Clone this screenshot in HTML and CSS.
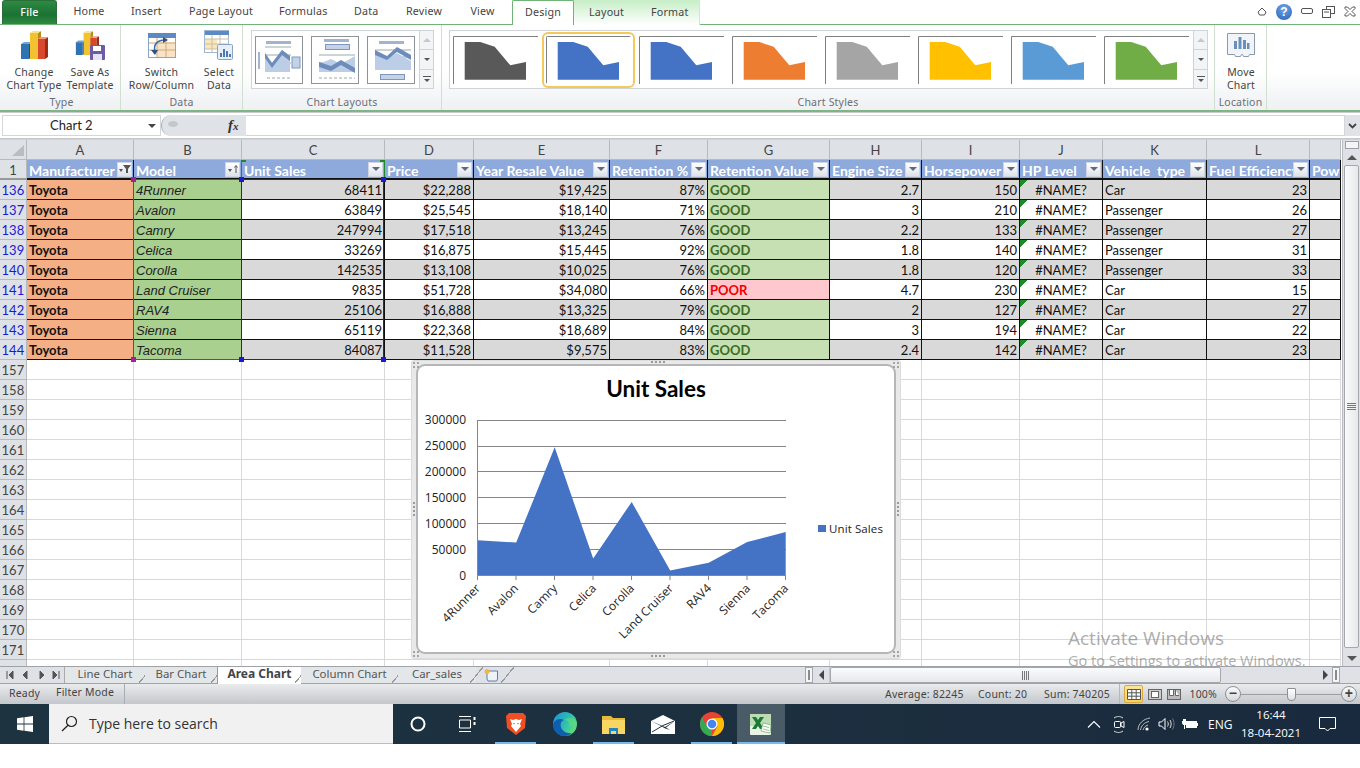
FILE: index.html
```html
<!DOCTYPE html>
<html lang="en">
<head>
  <meta charset="UTF-8" />
  <title>Car_sales - Microsoft Excel</title>
  <link rel="stylesheet" href="styles.css">
</head>
<body>
<svg class="defs" width="0" height="0">
  <symbol id="style-thumb" viewBox="0 0 85 48">
    <path d="M.5 48V.5H85" fill="none" stroke="#7f7f7f"/>
    <path d="M11.7 6H27.3L41.7 10.7 57.3 29.3 73 26V43.7H11.7Z" fill="currentColor"/>
  </symbol>
  <symbol id="bars" viewBox="0 0 28 30">
    <path d="M1 14h8v15H1z" fill="#2f73b5"/><path d="M9 14l3-2v15l-3 2z" fill="#174f86"/>
    <path d="M1 14l3-2h8l-3 2z" fill="#6ea7dc"/>
    <path d="M10 3h8v26h-8z" fill="#f2c230"/><path d="M18 3l3-2v26l-3 2z" fill="#b98d14"/>
    <path d="M10 3l3-2h8l-3 2z" fill="#f9e28a"/>
    <path d="M18 9h7v20h-7z" fill="#d9482b"/><path d="M25 9l3-2v20l-3 2z" fill="#9c2d15"/>
    <path d="M18 9l3-2h7l-3 2z" fill="#ee9a83"/>
  </symbol>
</svg>

<div class="app">
  <nav class="tabs">
    <a class="tab tab-file">File</a>
    <a class="tab tab-home">Home</a>
    <a class="tab tab-insert">Insert</a>
    <a class="tab tab-page">Page Layout</a>
    <a class="tab tab-formulas">Formulas</a>
    <a class="tab tab-data">Data</a>
    <a class="tab tab-review">Review</a>
    <a class="tab tab-view">View</a>
    <div class="chart-tools">
      <a class="tab tab-design">Design</a>
      <a class="tab tab-layout">Layout</a>
      <a class="tab tab-format">Format</a>
    </div>
    <div class="win-btns">
      <svg width="10" height="9" viewBox="0 0 10 9"><path d="M1 5l4-4 4 4-1.500 3h-5z" fill="#fff" stroke="#555"/></svg>
      <span class="help">?</span>
      <svg width="12" height="7" viewBox="0 0 12 7"><rect x=".5" y=".5" width="11" height="5" rx="1.500" fill="#fff" stroke="#555"/></svg>
      <svg width="13" height="12" viewBox="0 0 13 12"><rect x="4.500" y=".5" width="8" height="7" fill="#fff" stroke="#555"/><rect x=".5" y="3.500" width="8" height="8" fill="#fff" stroke="#555"/><path d="M2 6h5" stroke="#555"/></svg>
      <svg width="12" height="11" viewBox="0 0 12 11"><path d="M1 1h2.500L6 3.500 8.500 1H11v1.500L8 5.500l3 3V10H8.500L6 7.500 3.500 10H1V8.500l3-3-3-3z" fill="#fff" stroke="#555"/></svg>
    </div>
  </nav>

  <div class="ribbon">
    <section class="group g-type">
      <div class="group-body">
        <button class="big w-56">
          <svg class="big-icon" width="30" height="30"><use href="#bars"/></svg>
          <span>Change<br>Chart Type</span>
        </button>
        <button class="big w-56">
          <svg class="big-icon" width="30" height="30" viewBox="0 0 30 30">
            <use href="#bars" width="24" height="26" x="0" y="0"/>
            <rect x="15" y="15" width="15" height="15" rx="1" fill="#6f5aa8"/>
            <rect x="18" y="16" width="8" height="5" fill="#fff"/><rect x="18" y="24" width="9" height="6" fill="#e7e3f2"/>
          </svg>
          <span>Save As<br>Template</span>
        </button>
      </div>
      <div class="group-label">Type</div>
    </section>

    <section class="group g-data">
      <div class="group-body">
        <button class="big w-66">
          <svg class="big-icon" width="30" height="30" viewBox="0 0 30 30">
            <rect x="1.500" y="3.500" width="27" height="24" fill="#fff" stroke="#8da6c6"/>
            <rect x="1" y="3" width="28" height="5" fill="#5d8ac2"/>
            <rect x="10" y="12" width="18" height="15" fill="#f7e3c8"/>
            <path d="M2 13h26M2 20h26M10 8v19M19 8v19" stroke="#d6a774"/>
            <path d="M8 21c-2-7 3-11 10-11" fill="none" stroke="#3d6ba5" stroke-width="1.500"/>
            <path d="M16 7l5 3-5 3zM4 20l7 0-3 5z" fill="#2a5488"/>
          </svg>
          <span>Switch<br>Row/Column</span>
        </button>
        <button class="big w-48">
          <svg class="big-icon" width="30" height="30" viewBox="0 0 30 30">
            <rect x=".5" y=".5" width="24" height="22" fill="#fff" stroke="#9fb6d3"/>
            <rect x="1" y="1" width="24" height="4" fill="#5d8ac2"/>
            <rect x="1" y="9" width="12" height="10" fill="#fbe6b8"/>
            <path d="M1 9h24M1 14h24M1 19h24M8 5v18M16 5v18" stroke="#c8bfa8"/>
            <rect x="13.500" y="14.500" width="15" height="15" rx="1" fill="#e8eef6" stroke="#8ba3c0"/>
            <path d="M16 27v-4h2v4zM19 27v-8h2v8zM22 27v-6h2v6zM25 27v-3h2v3z" fill="#4e79b0"/>
          </svg>
          <span>Select<br>Data</span>
        </button>
      </div>
      <div class="group-label">Data</div>
    </section>

    <section class="group g-layouts">
      <div class="group-body">
        <div class="gallery gallery-layouts">
          <svg class="layout-thumb" width="48" height="48" viewBox="0 0 48 48">
            <rect x=".5" y=".5" width="47" height="47" fill="#fff" stroke="#8e9398"/>
            <rect x="11" y="5" width="25" height="3" fill="#a4b3cf"/>
            <rect x="3" y="16" width="2" height="17" fill="#a4b3cf"/>
            <path d="M10 11h26M10 19h26M10 27h26" stroke="#9aa"/>
            <path d="M10 17l7 10 10-13 8 6v16H10z" fill="#bccde6"/>
            <path d="M10 17l7 10 10-13 8 6v5l-8-6-10 13-7-10z" fill="#6d8cbb"/>
            <rect x="37" y="21" width="8" height="11" fill="#c4d2e8" stroke="#7f97bd"/>
            <path d="M12 42h24" stroke="#9aa" stroke-dasharray="3 2"/>
          </svg>
          <svg class="layout-thumb" width="48" height="48" viewBox="0 0 48 48">
            <rect x=".5" y=".5" width="47" height="47" fill="#fff" stroke="#8e9398"/>
            <rect x="13" y="3" width="25" height="3" fill="#a4b3cf"/>
            <rect x="14.500" y="8.500" width="24" height="5" fill="#c4d2e8" stroke="#7f97bd"/>
            <path d="M8 19h36M8 27h36" stroke="#9aa"/>
            <path d="M8 28l12-5 10 5 14-8v16H8z" fill="#bccde6"/>
            <path d="M8 26l12 4 10-6 14 8v5l-14-8-10 6-12-4z" fill="#6d8cbb"/>
            <path d="M8 42h36" stroke="#9aa" stroke-dasharray="3 2"/>
          </svg>
          <svg class="layout-thumb" width="48" height="48" viewBox="0 0 48 48">
            <rect x=".5" y=".5" width="47" height="47" fill="#fff" stroke="#8e9398"/>
            <rect x="12" y="5" width="25" height="3" fill="#a4b3cf"/>
            <path d="M8 14h36M8 21h36" stroke="#9aa"/>
            <path d="M8 17l12 6 10-6 14 8v9H8z" fill="#bccde6"/>
            <path d="M8 14l12 6 10-9 14 8v5l-14-8-10 8-12-5z" fill="#6d8cbb"/>
            <rect x="13.500" y="38.500" width="24" height="5" fill="#c4d2e8" stroke="#7f97bd"/>
          </svg>
          <div class="gal-scroll">
            <span class="up"></span><span class="down"></span><span class="more"></span>
          </div>
        </div>
      </div>
      <div class="group-label">Chart Layouts</div>
    </section>

    <section class="group g-styles">
      <div class="group-body">
        <div class="gallery gallery-styles">
          <svg class="style-thumb s-dark"><use href="#style-thumb"/></svg>
          <svg class="style-thumb s-blue selected"><use href="#style-thumb"/></svg>
          <svg class="style-thumb s-blue"><use href="#style-thumb"/></svg>
          <svg class="style-thumb s-orange"><use href="#style-thumb"/></svg>
          <svg class="style-thumb s-gray"><use href="#style-thumb"/></svg>
          <svg class="style-thumb s-yellow"><use href="#style-thumb"/></svg>
          <svg class="style-thumb s-sky"><use href="#style-thumb"/></svg>
          <svg class="style-thumb s-green"><use href="#style-thumb"/></svg>
          <div class="gal-scroll">
            <span class="up"></span><span class="down"></span><span class="more"></span>
          </div>
        </div>
      </div>
      <div class="group-label">Chart Styles</div>
    </section>

    <section class="group g-location">
      <div class="group-body">
        <button class="big w-50">
          <svg class="big-icon" width="30" height="26" viewBox="0 0 30 26">
            <path d="M1.500 1.500h27v21h-5l-1 2h-5l-1-2h-1l-1 2h-5l-1-2h-7z" fill="#f1f4f8" stroke="#8d98a8"/>
            <path d="M8 17V9h3v8zM12.500 17V5h3v12zM17 17V8h3v9zM21 17v-6h2.500v6z" fill="#6b8fbd"/>
          </svg>
          <span>Move<br>Chart</span>
        </button>
      </div>
      <div class="group-label">Location</div>
    </section>
  </div>

  <div class="formula-bar">
    <div class="name-box"><span>Chart 2</span><i class="caret"></i></div>
    <div class="fx-pill"><b class="fx-dot"></b><em class="fx">f<small>x</small></em></div>
    <div class="formula-input"></div>
    <div class="formula-expand">
      <svg width="9" height="6" viewBox="0 0 9 6"><path d="M1 1l3.500 3.500L8 1" fill="none" stroke="#444" stroke-width="1.800"/></svg>
    </div>
  </div>

  <div class="sheet">
    <div class="grid-wrap">
      <table class="grid">
        <colgroup>
          <col class="c-rh"><col class="c-a"><col class="c-b"><col class="c-c"><col class="c-d"><col class="c-e"><col class="c-f"><col class="c-g"><col class="c-h"><col class="c-i"><col class="c-j"><col class="c-k"><col class="c-l"><col class="c-m">
        </colgroup>
        <thead>
          <tr class="letters">
            <th class="corner"><svg width="14" height="13" viewBox="0 0 14 13"><path d="M13 1v11H1z" fill="#b9bec4"/></svg></th>
            <th>A</th><th>B</th><th>C</th><th>D</th><th>E</th><th>F</th><th>G</th><th>H</th><th>I</th><th>J</th><th>K</th><th>L</th><th></th>
          </tr>
          <tr class="head">
            <th class="rh">1</th>
            <th><div class="hd"><span>Manufacturer</span><i class="fbtn funnel"><svg width="12" height="10" viewBox="0 0 12 10"><path d="M4 1h8L9 5v4H7V5z" fill="#555"/><path d="M0 5h4L2 8z" fill="#555"/></svg></i></div></th>
            <th><div class="hd"><span>Model</span><i class="fbtn sort"><svg width="12" height="10" viewBox="0 0 12 10"><path d="M1 5h4L3 8z" fill="#555"/><path d="M9 9V2M7.500 3.500L9 1.500l1.500 2" fill="none" stroke="#555"/></svg></i></div></th>
            <th><div class="hd"><span>Unit Sales</span><i class="fbtn"></i></div></th>
            <th><div class="hd"><span>Price</span><i class="fbtn"></i></div></th>
            <th><div class="hd"><span>Year Resale Value</span><i class="fbtn"></i></div></th>
            <th><div class="hd"><span>Retention %</span><i class="fbtn"></i></div></th>
            <th><div class="hd"><span>Retention Value</span><i class="fbtn"></i></div></th>
            <th><div class="hd"><span>Engine Size</span><i class="fbtn"></i></div></th>
            <th><div class="hd"><span>Horsepower</span><i class="fbtn"></i></div></th>
            <th><div class="hd"><span>HP Level</span><i class="fbtn"></i></div></th>
            <th><div class="hd"><span>Vehicle&nbsp; type</span><i class="fbtn"></i></div></th>
            <th><div class="hd"><span>Fuel Efficiency</span><i class="fbtn"></i></div></th>
            <th><div class="hd"><span>Power Perf</span></div></th>
          </tr>
        </thead>
        <tbody>
          <tr class="data odd"><th class="rh blue">136</th><td class="make">Toyota</td><td class="model">4Runner</td><td class="num">68411</td><td class="num">$22,288</td><td class="num">$19,425</td><td class="num">87%</td><td class="good">GOOD</td><td class="num">2.7</td><td class="num">150</td><td class="err">#NAME?</td><td>Car</td><td class="num">23</td><td></td></tr>
          <tr class="data"><th class="rh blue">137</th><td class="make">Toyota</td><td class="model">Avalon</td><td class="num">63849</td><td class="num">$25,545</td><td class="num">$18,140</td><td class="num">71%</td><td class="good">GOOD</td><td class="num">3</td><td class="num">210</td><td class="err">#NAME?</td><td>Passenger</td><td class="num">26</td><td></td></tr>
          <tr class="data odd"><th class="rh blue">138</th><td class="make">Toyota</td><td class="model">Camry</td><td class="num">247994</td><td class="num">$17,518</td><td class="num">$13,245</td><td class="num">76%</td><td class="good">GOOD</td><td class="num">2.2</td><td class="num">133</td><td class="err">#NAME?</td><td>Passenger</td><td class="num">27</td><td></td></tr>
          <tr class="data"><th class="rh blue">139</th><td class="make">Toyota</td><td class="model">Celica</td><td class="num">33269</td><td class="num">$16,875</td><td class="num">$15,445</td><td class="num">92%</td><td class="good">GOOD</td><td class="num">1.8</td><td class="num">140</td><td class="err">#NAME?</td><td>Passenger</td><td class="num">31</td><td></td></tr>
          <tr class="data odd"><th class="rh blue">140</th><td class="make">Toyota</td><td class="model">Corolla</td><td class="num">142535</td><td class="num">$13,108</td><td class="num">$10,025</td><td class="num">76%</td><td class="good">GOOD</td><td class="num">1.8</td><td class="num">120</td><td class="err">#NAME?</td><td>Passenger</td><td class="num">33</td><td></td></tr>
          <tr class="data"><th class="rh blue">141</th><td class="make">Toyota</td><td class="model">Land Cruiser</td><td class="num">9835</td><td class="num">$51,728</td><td class="num">$34,080</td><td class="num">66%</td><td class="poor">POOR</td><td class="num">4.7</td><td class="num">230</td><td class="err">#NAME?</td><td>Car</td><td class="num">15</td><td></td></tr>
          <tr class="data odd"><th class="rh blue">142</th><td class="make">Toyota</td><td class="model">RAV4</td><td class="num">25106</td><td class="num">$16,888</td><td class="num">$13,325</td><td class="num">79%</td><td class="good">GOOD</td><td class="num">2</td><td class="num">127</td><td class="err">#NAME?</td><td>Car</td><td class="num">27</td><td></td></tr>
          <tr class="data"><th class="rh blue">143</th><td class="make">Toyota</td><td class="model">Sienna</td><td class="num">65119</td><td class="num">$22,368</td><td class="num">$18,689</td><td class="num">84%</td><td class="good">GOOD</td><td class="num">3</td><td class="num">194</td><td class="err">#NAME?</td><td>Car</td><td class="num">22</td><td></td></tr>
          <tr class="data odd"><th class="rh blue">144</th><td class="make">Toyota</td><td class="model">Tacoma</td><td class="num">84087</td><td class="num">$11,528</td><td class="num">$9,575</td><td class="num">83%</td><td class="good">GOOD</td><td class="num">2.4</td><td class="num">142</td><td class="err">#NAME?</td><td>Car</td><td class="num">23</td><td></td></tr>
          <tr><th class="rh">157</th><td></td><td></td><td></td><td></td><td></td><td></td><td></td><td></td><td></td><td></td><td></td><td></td><td></td></tr>
          <tr><th class="rh">158</th><td></td><td></td><td></td><td></td><td></td><td></td><td></td><td></td><td></td><td></td><td></td><td></td><td></td></tr>
          <tr><th class="rh">159</th><td></td><td></td><td></td><td></td><td></td><td></td><td></td><td></td><td></td><td></td><td></td><td></td><td></td></tr>
          <tr><th class="rh">160</th><td></td><td></td><td></td><td></td><td></td><td></td><td></td><td></td><td></td><td></td><td></td><td></td><td></td></tr>
          <tr><th class="rh">161</th><td></td><td></td><td></td><td></td><td></td><td></td><td></td><td></td><td></td><td></td><td></td><td></td><td></td></tr>
          <tr><th class="rh">162</th><td></td><td></td><td></td><td></td><td></td><td></td><td></td><td></td><td></td><td></td><td></td><td></td><td></td></tr>
          <tr><th class="rh">163</th><td></td><td></td><td></td><td></td><td></td><td></td><td></td><td></td><td></td><td></td><td></td><td></td><td></td></tr>
          <tr><th class="rh">164</th><td></td><td></td><td></td><td></td><td></td><td></td><td></td><td></td><td></td><td></td><td></td><td></td><td></td></tr>
          <tr><th class="rh">165</th><td></td><td></td><td></td><td></td><td></td><td></td><td></td><td></td><td></td><td></td><td></td><td></td><td></td></tr>
          <tr><th class="rh">166</th><td></td><td></td><td></td><td></td><td></td><td></td><td></td><td></td><td></td><td></td><td></td><td></td><td></td></tr>
          <tr><th class="rh">167</th><td></td><td></td><td></td><td></td><td></td><td></td><td></td><td></td><td></td><td></td><td></td><td></td><td></td></tr>
          <tr><th class="rh">168</th><td></td><td></td><td></td><td></td><td></td><td></td><td></td><td></td><td></td><td></td><td></td><td></td><td></td></tr>
          <tr><th class="rh">169</th><td></td><td></td><td></td><td></td><td></td><td></td><td></td><td></td><td></td><td></td><td></td><td></td><td></td></tr>
          <tr><th class="rh">170</th><td></td><td></td><td></td><td></td><td></td><td></td><td></td><td></td><td></td><td></td><td></td><td></td><td></td></tr>
          <tr><th class="rh">171</th><td></td><td></td><td></td><td></td><td></td><td></td><td></td><td></td><td></td><td></td><td></td><td></td><td></td></tr>
          <tr><th class="rh"></th><td></td><td></td><td></td><td></td><td></td><td></td><td></td><td></td><td></td><td></td><td></td><td></td><td></td></tr>
        </tbody>
      </table>

      <!-- range highlights of the chart's data -->
      <div class="range range-name"></div>
      <div class="range range-cat"><i class="h tl"></i><i class="h tr"></i><i class="h bl"></i><i class="h br"></i></div>
      <div class="range range-val"><i class="h tl"></i><i class="h tr"></i><i class="h bl"></i><i class="h br"></i></div>

      <div class="chart-frame">
        <i class="grip g-top"></i><i class="grip g-bot"></i><i class="grip g-left"></i><i class="grip g-right"></i>
        <i class="grip-c c-tl"></i><i class="grip-c c-tr"></i><i class="grip-c c-bl"></i><i class="grip-c c-br"></i>
        <div class="chart-area">
          <svg class="chart-svg" width="476" height="286" viewBox="418 366 476 286">
            <text class="chart-title" x="656" y="397">Unit Sales</text>
            <g class="gridlines">
              <path d="M477.500 420.500H786M477.500 446.500H786M477.500 471.500H786M477.500 497.500H786M477.500 523.500H786M477.500 549.500H786"/>
            </g>
            <polygon class="area" points="477.700,540.300 516.200,542.600 554.700,447.200 593.200,558.500 631.700,501.900 670.200,570.600 708.700,562.700 747.200,542 785.700,532.100 785.700,575.700 477.700,575.700"/>
            <g class="axis">
              <path d="M477.500 420V580M477 575.500H786M516 575v5M554.500 575v5M593 575v5M631.500 575v5M670 575v5M708.500 575v5M747 575v5M785.500 575v5"/>
            </g>
            <g class="y-labels">
              <text x="466" y="424">300000</text>
              <text x="466" y="450">250000</text>
              <text x="466" y="476">200000</text>
              <text x="466" y="502">150000</text>
              <text x="466" y="528">100000</text>
              <text x="466" y="554">50000</text>
              <text x="466" y="580">0</text>
            </g>
            <g class="x-labels">
              <text transform="translate(481 589) rotate(-45)">4Runner</text>
              <text transform="translate(519 589) rotate(-45)">Avalon</text>
              <text transform="translate(558 589) rotate(-45)">Camry</text>
              <text transform="translate(597 589) rotate(-45)">Celica</text>
              <text transform="translate(635 589) rotate(-45)">Corolla</text>
              <text transform="translate(674 589) rotate(-45)">Land Cruiser</text>
              <text transform="translate(712 589) rotate(-45)">RAV4</text>
              <text transform="translate(751 589) rotate(-45)">Sienna</text>
              <text transform="translate(789 589) rotate(-45)">Tacoma</text>
            </g>
            <rect class="area" x="818" y="525" width="8" height="7"/>
            <text class="legend" x="829" y="533">Unit Sales</text>
          </svg>
        </div>
      </div>

      <div class="activate">
        <div class="act-1">Activate Windows</div>
        <div class="act-2">Go to Settings to activate Windows.</div>
      </div>
    </div>

    <div class="vscroll">
      <div class="split-h"></div>
      <div class="arr-btn"><i class="tri-up"></i></div>
      <div class="v-thumb"><span class="v-grip"></span></div>
      <div class="arr-btn"><i class="tri-down"></i></div>
    </div>
  </div>

  <div class="sheet-tabs">
    <div class="tab-nav">
      <svg width="58" height="10" viewBox="0 0 58 10">
        <path d="M2 1v8M8 1L4 5l4 4zM22 1l-4 4 4 4zM35 1l4 4-4 4zM48 1l4 4-4 4zM54 1v8" fill="#555" stroke="#555"/>
      </svg>
    </div>
    <a class="s-tab s-line">Line Chart</a>
    <a class="s-tab s-bar">Bar Chart</a>
    <a class="s-tab s-area active">Area Chart</a>
    <a class="s-tab s-col">Column Chart</a>
    <a class="s-tab s-car">Car_sales</a>
    <a class="s-tab s-new">
      <svg width="16" height="14" viewBox="0 0 16 14"><path d="M4 3h10.500v8l-1 2H5l-1-2z" fill="#eef3fa" stroke="#5d7ea8"/><circle cx="4" cy="3.500" r="2.500" fill="#f3b73e"/></svg>
    </a>
    <div class="h-split"><i></i></div>
    <div class="h-left"><i class="tri-left"></i></div>
    <div class="h-track">
      <div class="h-thumb"><span class="h-grip"></span></div>
      <i class="tri-right"></i>
      <div class="h-split end"><i></i></div>
    </div>
  </div>

  <footer class="status">
    <span class="st-ready">Ready</span>
    <span class="st-filter">Filter Mode</span>
    <div class="st-right">
      <span class="st-avg">Average: 82245</span>
      <span class="st-count">Count: 20</span>
      <span class="st-sum">Sum: 740205</span>
      <div class="views">
        <span class="view active"><svg width="14" height="11" viewBox="0 0 14 11"><path d="M.5.5h13v10H.5zM.5 3.800h13M.5 7.200h13M4.800.5v10M9.200.5v10" fill="#fff" stroke="#555"/></svg></span>
        <span class="view"><svg width="14" height="11" viewBox="0 0 14 11"><rect x=".5" y=".5" width="13" height="10" fill="#ccc" stroke="#666"/><rect x="3.500" y="2.500" width="7" height="6" fill="#fff" stroke="#666"/></svg></span>
        <span class="view"><svg width="14" height="11" viewBox="0 0 14 11"><rect x=".5" y=".5" width="13" height="10" fill="#bbb" stroke="#666"/><path d="M2.500 1v5.500h4V1M8.500 1v5.500h3.500" fill="#fff" stroke="#666"/></svg></span>
      </div>
      <span class="st-zoom">100%</span>
      <span class="zoom-btn">&#8722;</span>
      <div class="zoom-track"><i class="zoom-thumb"></i></div>
      <span class="zoom-btn">+</span>
    </div>
  </footer>

  <div class="taskbar">
    <div class="start">
      <svg width="16" height="16" viewBox="0 0 16 16"><path d="M0 2.300l6.600-1v6.300H0zM7.400 1.200L16 0v7.600H7.400zM0 8.400h6.600v6.300l-6.600-1zM7.400 8.400H16V16l-8.600-1.200z" fill="#fff"/></svg>
    </div>
    <div class="search">
      <svg width="17" height="17" viewBox="0 0 17 17"><circle cx="10.500" cy="6.500" r="5" fill="none" stroke="#222" stroke-width="1.200"/><path d="M7 10.200L1 16" stroke="#222" stroke-width="1.300"/></svg>
      <span>Type here to search</span>
    </div>
    <div class="task-icons">
      <div class="ti"><svg width="16" height="16" viewBox="0 0 16 16"><circle cx="8" cy="8" r="6.500" fill="none" stroke="#fff" stroke-width="2"/></svg></div>
      <div class="ti"><svg width="18" height="16" viewBox="0 0 18 16"><path d="M1 .5h12M1 15.500h12M1.500 4h11v8h-11z" fill="none" stroke="#fff"/><path d="M15.500 1h2v3h-2zM15.500 6h2v3h-2z" fill="#fff"/></svg></div>
      <div class="ti open"><svg width="22" height="24" viewBox="0 0 22 24">
        <path d="M4 1h14l3 3-1 12-9 7-9-7L1 4z" fill="#f04e23"/>
        <path d="M5 7l3 1 3-1 3 1 3-1-2 5 1 2-5 6-5-6 1-2z" fill="#fff"/>
        <path d="M8 11h2l-1 1.500zM12 11h2l-1 1.500z" fill="#f04e23"/>
      </svg></div>
      <div class="ti"><svg width="24" height="24" viewBox="0 0 24 24">
        <defs><linearGradient id="edgeg" x1="0" y1="0" x2="1" y2=".6"><stop offset="0" stop-color="#1b8fd8"/><stop offset=".6" stop-color="#2fbfb0"/><stop offset="1" stop-color="#5fdc7c"/></linearGradient></defs>
        <circle cx="12" cy="12" r="12" fill="url(#edgeg)"/>
        <path d="M0 12c1 7 7 12 14 11.800C8 25 0 21 0 12z" fill="#0c59a4"/>
        <path d="M0 12C2 7 7 6 11 8c-3 1-4 4-3 7 1 4 6 7 11 6-2 2-5 3-7 3C5 24 0 18 0 12z" fill="#0f5fb0"/>
        <path d="M11 8c4 0 6 3 5 6h6c1-3 1-4 0-6-2-2-6-3-11 0z" fill="#5fdc7c" opacity=".6"/>
      </svg></div>
      <div class="ti open"><svg width="23" height="19" viewBox="0 0 23 19">
        <path d="M0 1h9l2 2h12v16H0z" fill="#e5b93c"/><path d="M0 5h23v14H0z" fill="#f9d561"/>
        <path d="M7 13h9v6h-2v-3H9v3H7z" fill="#1f87c8"/>
      </svg></div>
      <div class="ti"><svg width="24" height="19" viewBox="0 0 24 19">
        <path d="M0 6L12 0l12 6v13H0z" fill="#fff"/>
        <path d="M0 6l14 6 10-6-9 6.500 4 2.500-6-2-1-1z" fill="#1d3340"/>
        <path d="M1 17l11-6.500L23 6" fill="none" stroke="#1d3340"/>
      </svg></div>
      <div class="ti open"><svg width="24" height="24" viewBox="0 0 24 24">
        <circle cx="12" cy="12" r="12" fill="#ea4335"/>
        <path d="M12 24a12 12 0 0 1-10.400-6A12 12 0 0 1 2 5.500L7 14l5 0z" fill="#34a853"/>
        <path d="M22.400 6A12 12 0 0 1 12 24l5.500-9.500L12 6z" fill="#fbbc05"/>
        <circle cx="12" cy="12" r="5.500" fill="#fff"/><circle cx="12" cy="12" r="4.300" fill="#4285f4"/>
      </svg></div>
      <div class="ti open active"><svg width="22" height="21" viewBox="0 0 22 21">
        <rect x="0" y="0" width="21" height="21" rx="1" fill="#e8f3e6"/>
        <rect x="0" y="0" width="21" height="12" fill="#bcdcb4"/>
        <path d="M2 3h4l2 3 2-3h4l-4 6 4 6h-4l-2-3-2 3H2l4-6z" fill="#1d7a34"/>
        <path d="M13 9l8 2-1 8-9-2z" fill="#fff" stroke="#6aa86a" stroke-width=".7"/>
        <path d="M13 12l6 1.500M13 15l6 1.500" stroke="#6aa86a" stroke-width=".7"/>
      </svg></div>
    </div>
    <div class="tray">
      <svg class="tr-up" width="14" height="8" viewBox="0 0 14 8"><path d="M1 7.500L7 1.500l6 6" fill="none" stroke="#fff" stroke-width="1.100"/></svg>
      <svg class="tr-meet" width="12" height="17" viewBox="0 0 12 17"><path d="M1 2c3-2 6-2 9 0M1 15c3 2 6 2 9 0" fill="none" stroke="#ddd"/><rect x="1.500" y="5.500" width="6" height="6" rx="1" fill="none" stroke="#fff"/><path d="M8 7l3-1.500v6L8 10z" fill="none" stroke="#fff"/></svg>
      <svg class="tr-wifi" width="14" height="14" viewBox="0 0 14 14"><path d="M1 13C1 7 6 2 13 1M3.500 13C4 9 7 5.500 12 4.500M6 13c.5-2 2-4 5-5" fill="none" stroke="#bbb"/><circle cx="10" cy="12" r="1.600" fill="#fff"/></svg>
      <svg class="tr-vol" width="17" height="14" viewBox="0 0 17 14"><path d="M1 5h2.500L7 1.500v11L3.500 9H1z" fill="none" stroke="#fff"/><path d="M9.500 4.500c1 1.500 1 3.500 0 5M12 3c1.500 2.500 1.500 5.500 0 8" fill="none" stroke="#ddd"/><path d="M14.500 1.500c2 3 2 8 0 11" fill="none" stroke="#777"/></svg>
      <svg class="tr-bat" width="16" height="12" viewBox="0 0 16 12"><rect x="4.500" y="3.500" width="10" height="6" fill="#fff" stroke="#fff"/><path d="M15 5h1v3h-1zM1 1v2h3V1M0 3h5v2l-1 2H1L0 5zM2 7h1v4H2z" fill="#fff"/></svg>
      <span class="tr-lang">ENG</span>
      <div class="clock"><div>16:44</div><div>18-04-2021</div></div>
      <svg class="tr-note" width="17" height="15" viewBox="0 0 17 15"><path d="M.5.5h16v11H11l-2.500 2.500L6 11.500H.5z" fill="none" stroke="#fff"/></svg>
    </div>
  </div>
</div>
</body>
</html>
```
FILE: styles.css
```css
* { box-sizing: border-box; }
html, body { margin: 0; background: #fff; }
body { width: 1360px; height: 768px; overflow: hidden; font-family: "Noto Sans", sans-serif; font-size: 11px; color: #444; }
.defs { position: absolute; }
.app { width: 1360px; height: 744px; display: flex; flex-direction: column; }
a { display: block; }
i, em { font-style: normal; }

/* ribbon tabs */
.tabs { height: 25px; display: flex; align-items: flex-end; border-bottom: 1px solid #6fb376; flex: none; font-size: 10.700px; letter-spacing: .2px; white-space: nowrap; }
.tab { height: 24px; line-height: 23px; text-align: center; flex: none; }
.tab-file { width: 55px; margin-left: 2px; color: #fff; font-weight: 500; border-radius: 3px 3px 0 0; background: linear-gradient(#2e8a42, #1b7233 60%, #2e8a42); border: 1px solid #2a6e3a; border-bottom: 0; }
.tab-home { width: 32px; margin-left: 16px; }
.tab-insert { width: 30px; margin-left: 26px; }
.tab-page { width: 62px; margin-left: 28px; }
.tab-formulas { width: 47px; margin-left: 28px; }
.tab-data { width: 24px; margin-left: 28px; }
.tab-review { width: 36px; margin-left: 28px; }
.tab-view { width: 25px; margin-left: 28px; }
.chart-tools { width: 188px; height: 25px; margin-left: 17px; margin-bottom: -1px; display: flex; align-items: flex-end; background: linear-gradient(#c6eec6, #fff); border-right: 1px solid #cfe8cf; }
.tab-design { width: 62px; height: 25px; background: #fff; border: 1px solid #6fb376; border-bottom: 0; border-radius: 2px 2px 0 0; }
.tab-layout { width: 34px; margin-left: 15px; }
.tab-format { width: 36px; margin-left: 28px; }
.win-btns { margin-left: auto; margin-right: 4px; height: 24px; display: flex; align-items: center; gap: 9px; padding-bottom: 1px; }
.help { width: 16px; height: 16px; border-radius: 50%; background: radial-gradient(circle at 50% 30%, #6ea4e6, #2a62b4); color: #fff; font: bold 12px/16px "Liberation Sans", sans-serif; text-align: center; }

/* ribbon */
.ribbon { height: 87px; flex: none; display: flex; padding-left: 3px; background: linear-gradient(#fff, #fff 55%, #eef0f2); border-bottom: 2px solid #7fb584; box-shadow: 0 1px 0 #c8cacc; }
.group { display: flex; flex-direction: column; border-right: 1px solid #cfe0d0; flex: none; }
.group-body { height: 70px; display: flex; padding-top: 5px; }
.group-label { height: 15px; line-height: 14px; text-align: center; color: #6a6f78; font-size: 10.500px; letter-spacing: .2px; }
.g-type { width: 118px; }
.g-type .group-body { padding-left: 3px; }
.g-data { width: 122px; }
.g-data .group-body { padding-left: 7px; }
.g-layouts { width: 199px; }
.g-layouts .group-body { padding-left: 8px; }
.g-styles { width: 773px; }
.g-styles .group-body { padding-left: 7px; }
.g-location { width: 52px; }
.g-location .group-body { padding-left: 1px; }
.big { border: 0; background: none; padding: 0; display: flex; flex-direction: column; align-items: center; font: 10.500px/13px "Noto Sans", sans-serif; color: #444; text-align: center; flex: none; white-space: nowrap; letter-spacing: .2px; }
.big-icon { height: 30px; margin-bottom: 6px; flex: none; }
.w-56 { width: 56px; }
.w-66 { width: 67px; }
.w-48 { width: 48px; }
.w-50 { width: 50px; }
.gallery { height: 59px; display: flex; align-items: center; background: #fff; border: 1px solid #d0d3d7; padding-left: 3px; position: relative; }
.gallery-layouts { width: 183px; gap: 8px; }
.gallery-styles { width: 759px; gap: 8px; }
.layout-thumb { flex: none; }
.style-thumb { width: 85px; height: 48px; flex: none; }
.style-thumb.selected { outline: 2px solid #f5c85a; outline-offset: 2px; border-radius: 2px; }
.s-dark { color: #595959; }
.s-blue { color: #4472c4; }
.s-orange { color: #ed7d31; }
.s-gray { color: #a5a5a5; }
.s-yellow { color: #ffc000; }
.s-sky { color: #5b9bd5; }
.s-green { color: #70ad47; }
.gal-scroll { position: absolute; right: 0; top: 0; bottom: 0; width: 14px; display: flex; flex-direction: column; background: #f3f4f6; border-left: 1px solid #d0d3d7; }
.gal-scroll span { flex: 1; display: flex; align-items: center; justify-content: center; border-bottom: 1px solid #d0d3d7; }
.gal-scroll span:last-child { border-bottom: 0; }
.gal-scroll .up::after { content: ""; border: 4px solid transparent; border-top: 0; border-bottom-color: #c4c8cd; }
.gal-scroll .down::after { content: ""; border: 3.500px solid transparent; border-bottom: 0; border-top-color: #555; }
.gal-scroll .more { flex-direction: column; gap: 2px; }
.gal-scroll .more::before { content: ""; width: 8px; height: 1px; background: #555; }
.gal-scroll .more::after { content: ""; border: 3.500px solid transparent; border-bottom: 0; border-top-color: #555; }

/* formula bar */
.formula-bar { height: 24px; margin-top: 3px; flex: none; display: flex; padding-left: 2px; border-bottom: 1px solid #c6c8cb; }
.name-box { width: 159px; height: 21px; background: #fff; border: 1px solid #d4d6d9; font: 13px/19px Lato, sans-serif; color: #222; position: relative; padding-left: 47px; }
.caret { position: absolute; right: 4px; top: 8px; border: 4px solid transparent; border-bottom: 0; border-top-color: #444; }
.fx-pill { width: 85px; height: 21px; background: #dfe2e6; display: flex; align-items: center; justify-content: flex-end; position: relative; border-left: 1px solid #aeb2b7; border-radius: 10px 0 0 10px; }
.fx-dot { position: absolute; left: 6px; top: 6px; width: 10px; height: 6px; border-radius: 50%; background: #c4c7cb; }
.fx { width: 18px; font: italic bold 15px "Liberation Serif", serif; color: #333; }
.fx small { font-size: 11px; }
.formula-input { flex: 1; height: 21px; background: #fff; border: 1px solid #d4d6d9; margin-left: -1px; }
.formula-expand { width: 15px; height: 21px; background: #dfe2e6; display: flex; align-items: center; justify-content: center; }

/* sheet */
.sheet { height: 527px; flex: none; display: flex; border-top: 1px solid #cfd1d4; background: #fff; overflow: hidden; }
.grid-wrap { width: 1342px; position: relative; overflow: hidden; }
.grid { width: 1341px; table-layout: fixed; border-collapse: separate; border-spacing: 0; font: 13px Lato, sans-serif; color: #111; }
.c-rh { width: 27px; } .c-a { width: 107px; } .c-b { width: 108px; } .c-c { width: 143px; } .c-d { width: 89px; } .c-e { width: 136px; } .c-f { width: 98px; } .c-g { width: 122px; } .c-h { width: 92px; } .c-i { width: 98px; } .c-j { width: 83px; } .c-k { width: 104px; } .c-l { width: 103px; } .c-m { width: 31px; }
.grid tr { height: 20px; }
.grid td { height: 20px; padding: 0 2px; border-right: 1px solid #d9d9d9; border-bottom: 1px solid #d9d9d9; white-space: nowrap; overflow: hidden; }
.letters th { height: 20px; background: #dee1e5; border-right: 1px solid #b6babf; border-bottom: 1px solid #b6babf; font-weight: 400; color: #444; padding: 1px 0 0; }
.corner { text-align: right; padding: 2px 1px 0 0 !important; line-height: 0; }
.head th { height: 20px; background: #8ea9db; color: #fff; font-weight: 700; font-size: 14px; border-right: 1px solid #111; border-bottom: 2px solid #111; padding: 0 0 0 2px; text-align: left; overflow: hidden; }
.rh, .head th.rh { background: #dee1e5; color: #444; font-weight: 400; font-size: 13px; text-align: center; border-right: 1px solid #b6babf; border-bottom: 1px solid #b6babf; padding: 0; letter-spacing: .2px; }
.head th.rh { border-bottom: 2px solid #999; padding-top: 1px; }
.rh.blue { color: #1a1ad0; }
.hd { display: flex; align-items: center; justify-content: space-between; height: 18px; overflow: hidden; }
.hd span { white-space: nowrap; overflow: hidden; flex: 1; min-width: 0; padding-top: 2px; }
.fbtn { width: 15px; height: 15px; flex: none; margin-right: 1px; display: flex; align-items: center; justify-content: center; background: linear-gradient(#fff, #dde2ea); border: 1px solid #cfd6e2; }
.fbtn:empty::after { content: ""; border: 4px solid transparent; border-bottom: 0; border-top-color: #606a78; }
.data td { border-right-color: #111; border-bottom-color: #111; background: #fff; }
.data.odd td { background: #d9d9d9; }
.data td.make { background: #f4b084; font-weight: 700; }
.data td.model { background: #a9d08e; font: italic 13px "Liberation Sans", sans-serif; color: #222; padding-top: 1px; }
.data td.good { background: #c6e0b4; font-weight: 700; color: #3d6b1f; }
.data td.poor { background: #ffc7ce; font-weight: 700; color: #f00000; }
.num { text-align: right; }
.err { text-align: center; background-image: linear-gradient(135deg, #1f8a2c 5px, transparent 5px) !important; }
.data.odd td.err { background: linear-gradient(135deg, #1f8a2c 5px, transparent 5px), #d9d9d9; }

/* chart range overlays */
.range { position: absolute; pointer-events: none; }
.range-name { left: 241px; top: 20px; width: 144px; height: 19px; border: 1px solid #1f8a2c; border-width: 0 1px; }
.range-name::before, .range-name::after { content: ""; position: absolute; top: 0; width: 4px; height: 2px; background: #1f8a2c; }
.range-name::before { left: 0; }
.range-name::after { right: 0; }
.range-cat { left: 133px; top: 39px; width: 109px; height: 181px; border: 1px solid #a020a0; }
.range-val { left: 241px; top: 39px; width: 143px; height: 181px; border: 1px solid #1a1ad0; }
.h { position: absolute; width: 5px; height: 5px; }
.range-cat .h { background: #a020a0; }
.range-val .h { background: #1a1ad0; }
.tl { left: -3px; top: -3px; } .tr { right: -3px; top: -3px; } .bl { left: -3px; bottom: -3px; } .br { right: -3px; bottom: -3px; }

/* chart */
.chart-frame { position: absolute; left: 411px; top: 220px; width: 490px; height: 299px; background: #e9e9ea; border: 1px solid #dcdcdc; border-radius: 3px; padding: 3px 4px 4px; }
.chart-area { width: 100%; height: 100%; background: #fff; border: 2px solid #b4b6b8; border-radius: 9px; overflow: hidden; }
.chart-svg { display: block; }
.chart-title { font: 700 22.500px Lato, sans-serif; text-anchor: middle; fill: #000; }
.gridlines path, .axis path { fill: none; stroke: #868686; stroke-width: 1; }
.area { fill: #4472c4; }
.y-labels text { font: 12px "Open Sans", sans-serif; text-anchor: end; fill: #222; }
.x-labels text { font: 12px "Open Sans", sans-serif; text-anchor: end; fill: #222; }
.legend { font: 11.500px "Open Sans", sans-serif; fill: #222; letter-spacing: .1px; }
.grip { position: absolute; background: radial-gradient(circle, #9a9a9a 1px, transparent 1.200px); background-size: 4px 4px; }
.g-top { left: 238px; top: -1px; width: 16px; height: 4px; }
.g-bot { left: 238px; bottom: 0; width: 16px; height: 4px; }
.g-left { left: 0; top: 140px; width: 4px; height: 16px; }
.g-right { right: 0; top: 140px; width: 4px; height: 16px; }
.grip-c { position: absolute; width: 8px; height: 8px; background: radial-gradient(circle, #a5a5a5 1px, transparent 1.200px); background-size: 4px 4px; }
.c-tl { left: 0; top: 0; } .c-tr { right: 0; top: 0; } .c-bl { left: 0; bottom: 0; } .c-br { right: 0; bottom: 0; }

.activate { position: absolute; left: 1068px; top: 485px; color: rgba(120,120,120,.62); font-family: "Open Sans", sans-serif; white-space: nowrap; }
.act-1 { font-size: 19px; line-height: 26px; }
.act-2 { font-size: 14.500px; line-height: 20px; }

/* scrollbars */
.vscroll { flex: 1; display: flex; flex-direction: column; align-items: center; background: #dee1e5; border-left: 1px solid #b9bcc0; }
.split-h { width: 14px; height: 8px; margin-top: 1px; background: #f4f5f7; border: 1px solid #9ca0a6; flex: none; }
.arr-btn { height: 16px; flex: none; display: flex; align-items: center; justify-content: center; width: 100%; }
.tri-up { border: 5px solid transparent; border-top: 0; border-bottom: 5px solid #555; }
.tri-down { border: 5px solid transparent; border-bottom: 0; border-top: 5px solid #555; }
.v-thumb { flex: 1; width: 15px; margin: 0 0 2px; background: linear-gradient(90deg, #fafbfc, #e6e8eb); border: 1px solid #a4a8ad; border-radius: 2px; display: flex; align-items: center; justify-content: center; }
.v-grip { width: 9px; height: 7px; background: repeating-linear-gradient(#777 0 1px, transparent 1px 2px); }

.sheet-tabs { height: 18px; flex: none; display: flex; align-items: stretch; background: #dee1e5; border-top: 1px solid #9fa3a8; border-bottom: 1px solid #9fa3a8; font-size: 11.400px; color: #555; position: relative; }
.tab-nav { width: 64px; padding-left: 5px; display: flex; align-items: center; flex: none; }
.s-tab { height: 16px; line-height: 14px; flex: none; text-align: center; position: relative; background: #e4e7ea; }
.s-tab::after { content: ""; position: absolute; right: -7px; top: 0; width: 13px; height: 16px; background: linear-gradient(to top left, transparent calc(50% - .6px), #999 calc(50% - .6px), #999 calc(50% + .6px), transparent calc(50% + .6px)); }
.s-line { width: 81px; border-left: 1px solid #aaa; }
.s-bar { width: 72px; }
.s-area { width: 84px; background: #fff; font-weight: 700; font-size: 12px; color: #444; height: 17px; border-left: 1px solid #999; }
.s-col { width: 97px; }
.s-car { width: 78px; }
.s-new { width: 30px; display: flex; align-items: center; justify-content: center; background: none; }
.s-new::after { right: -8px; }
.h-split { width: 8px; margin-left: auto; display: flex; align-items: center; justify-content: center; background: #f4f5f7; border: 1px solid #a4a8ad; flex: none; }
.h-split i { width: 2px; height: 10px; border: 1px solid #8a8a8a; border-width: 0 1px; }
.h-left { width: 17px; display: flex; align-items: center; justify-content: center; flex: none; border-right: 1px solid #c4c7cb; }
.tri-left { border: 5px solid transparent; border-left: 0; border-right: 5px solid #444; }
.tri-right { border: 5px solid transparent; border-right: 0; border-left: 5px solid #444; margin-left: auto; align-self: center; margin-right: 4px; }
.h-track { width: 530px; display: flex; flex: none; }
.h-thumb { width: 391px; background: linear-gradient(#fafbfc, #e6e8eb); border: 1px solid #a4a8ad; border-radius: 2px; display: flex; align-items: center; justify-content: center; flex: none; }
.h-grip { width: 7px; height: 9px; background: repeating-linear-gradient(90deg, #777 0 1px, transparent 1px 2px); }
.h-split.end { margin: 0 20px 0 0; }

/* status bar */
.status { height: 20px; flex: none; display: flex; align-items: center; background: linear-gradient(#e9ebed, #c4c7cb); font-size: 10.500px; color: #444; letter-spacing: .2px; }
.st-ready { margin-left: 9px; width: 47px; padding-bottom: 3px; }
.st-filter { width: 69px; height: 20px; line-height: 17px; border-right: 1px solid #a9acb0; }
.st-right { margin-left: auto; margin-right: 3px; display: flex; align-items: center; height: 20px; }
.st-avg { width: 93px; }
.st-count { width: 66px; }
.st-sum { width: 75px; }
.views { display: flex; align-items: center; height: 20px; border-left: 1px solid #b4b7bb; padding-left: 4px; }
.view { width: 19px; height: 18px; display: flex; align-items: center; justify-content: center; }
.view.active { background: linear-gradient(#fbe6a0, #f7cf5c); border: 1px solid #d9a83e; border-radius: 2px; margin-right: 2px; }
.st-zoom { width: 34px; text-align: right; margin-right: 8px; }
.zoom-btn { width: 16px; height: 16px; border-radius: 50%; background: linear-gradient(#fafbfc, #d4d7db); border: 1px solid #8c9096; font: bold 14px/13px "Liberation Sans", sans-serif; text-align: center; color: #444; flex: none; }
.zoom-track { width: 100px; height: 1px; background: #9a9da1; position: relative; }
.zoom-thumb { position: absolute; left: 46px; top: -6px; width: 9px; height: 13px; background: linear-gradient(#fff, #dcdfe3); border: 1px solid #8c9096; border-radius: 1px 1px 4px 4px; }

/* taskbar */
.taskbar { height: 40px; flex: none; display: flex; background: linear-gradient(90deg, #1d3340, #1c2f3f 60%, #1a2a3e); color: #fff; position: relative; }
.start { width: 49px; display: flex; align-items: center; justify-content: center; flex: none; }
.search { width: 344px; display: flex; align-items: center; gap: 11px; padding-left: 12px; background: #f1f1f1; border-bottom: 1px solid #bcbcbc; color: #333; font: 14px "Open Sans", sans-serif; flex: none; }
.task-icons { display: flex; }
.ti { width: 49px; height: 40px; display: flex; align-items: center; justify-content: center; position: relative; flex: none; }
.ti.open::after { content: ""; position: absolute; left: 4px; right: 4px; bottom: 0; height: 2px; background: #76b9ed; }
.ti.active { background: #4a5b68; margin-left: 1px; width: 48px; }
.ti.active::after { left: 0; right: 0; }
.tray { margin-left: auto; display: flex; align-items: center; padding-right: 24px; height: 40px; font: 12px "Open Sans", sans-serif; color: #fff; flex: none; }
.tr-up { margin-right: 12px; }
.tr-meet { margin-right: 12px; }
.tr-wifi { margin-right: 7px; }
.tr-vol { margin-right: 7px; }
.tr-bat { margin-right: 10px; }
.tr-lang { width: 31px; }
.clock { width: 64px; text-align: center; line-height: 18px; margin-right: 16px; font-size: 11.500px; white-space: nowrap; }
```
